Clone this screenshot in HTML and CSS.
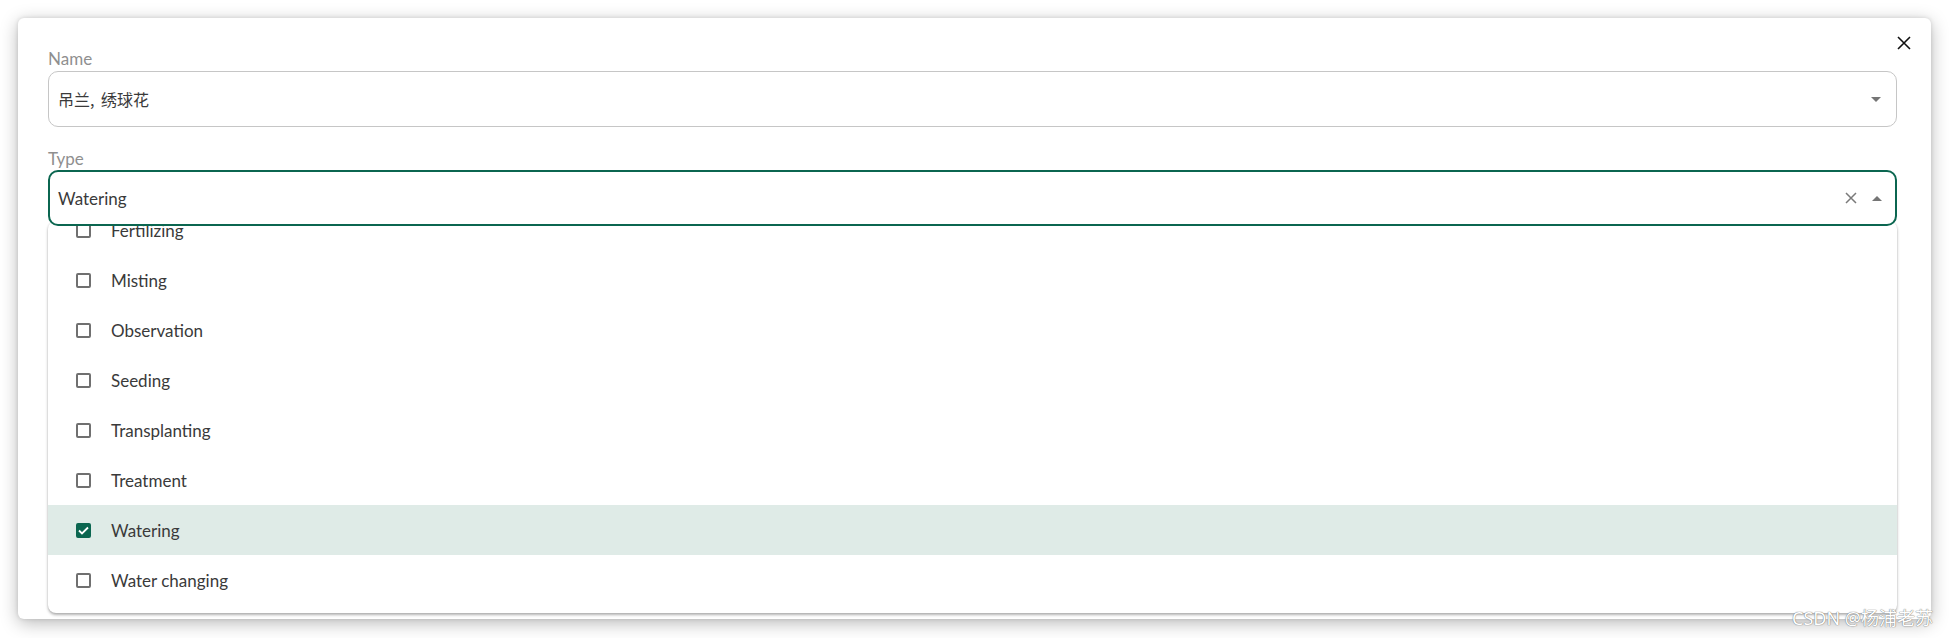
FILE: index.html
```html
<!DOCTYPE html>
<html lang="en">
<head>
    <meta charset="UTF-8">
    <meta name="viewport" content="width=device-width, initial-scale=1.0">
    <title>Add record</title>
    <link rel="stylesheet" href="styles.css">
</head>
<body>
    <div class="dialog">
        <button class="close-button" aria-label="Close">
            <svg width="14" height="14" viewBox="0 0 14 14"><path d="M1 1 L13 13 M13 1 L1 13" stroke="#111" stroke-width="1.6" fill="none"/></svg>
        </button>

        <div class="field">
            <label class="field-label">Name</label>
            <div class="select">
                <span class="select-value cjk">吊兰, 绣球花</span>
                <span class="select-icons">
                    <svg class="caret" width="10" height="5" viewBox="0 0 10 5"><path d="M0 0 L10 0 L5 5 Z" fill="#757575"/></svg>
                </span>
            </div>
        </div>

        <div class="field">
            <label class="field-label">Type</label>
            <div class="select-wrap">
                <div class="select focused">
                    <span class="select-value">Watering</span>
                    <span class="select-icons">
                        <svg class="clear" width="12" height="12" viewBox="0 0 12 12"><path d="M1 1 L11 11 M11 1 L1 11" stroke="#7a7a7a" stroke-width="1.5" fill="none"/></svg>
                        <svg class="caret" width="10" height="5" viewBox="0 0 10 5"><path d="M0 5 L10 5 L5 0 Z" fill="#757575"/></svg>
                    </span>
                </div>
                <!-- dropdown, scrolled a bit -->
                <div class="menu">
                    <ul class="options">
                        <li class="option"><span class="checkbox"></span>Fertilizing</li>
                        <li class="option"><span class="checkbox"></span>Misting</li>
                        <li class="option"><span class="checkbox"></span>Observation</li>
                        <li class="option"><span class="checkbox"></span>Seeding</li>
                        <li class="option"><span class="checkbox"></span>Transplanting</li>
                        <li class="option"><span class="checkbox"></span>Treatment</li>
                        <li class="option selected">
                            <span class="checkbox checked">
                                <svg width="11" height="9" viewBox="0 0 11 9"><path d="M1 4.5 L4 7.5 L10 1.5" stroke="#fff" stroke-width="1.8" fill="none"/></svg>
                            </span>Watering
                        </li>
                        <li class="option"><span class="checkbox"></span>Water changing</li>
                    </ul>
                </div>
            </div>
        </div>
    </div>

    <div class="watermark">CSDN @杨浦老苏</div>
</body>
</html>
```

FILE: styles.css
```css
/* General */
body {
    margin: 0;
    padding: 0;
    background-color: #ffffff;
    font-family: Lato, "Noto Sans", "Noto Sans CJK SC", sans-serif;
    color: #3a3a3a;
    height: 638px;
    overflow: hidden;
    position: relative;
}

.cjk {
    font-family: "Noto Sans CJK SC", sans-serif;
}

/* Dialog */
.dialog {
    position: relative;
    margin: 18px;
    height: 601px;
    box-sizing: border-box;
    padding: 31px 34px 0 30px;
    background-color: #fff;
    border-radius: 6px;
    box-shadow: 0 4px 18px rgba(0, 0, 0, 0.28), 0 0 4px rgba(0, 0, 0, 0.12);
}

.close-button {
    position: absolute;
    top: 17px;
    right: 19px;
    width: 16px;
    height: 16px;
    padding: 0;
    border: none;
    background: none;
    display: flex;
    align-items: center;
    justify-content: center;
}

/* Fields */
.field {
    margin-bottom: 22px;
}

.field-label {
    display: block;
    font-size: 17px;
    line-height: 20px;
    color: #8f8f8f;
    margin-bottom: 2px;
}

.field + .field .field-label {
    margin-bottom: 1px;
}

.select {
    position: relative;
    z-index: 1;
    display: flex;
    align-items: center;
    height: 56px;
    box-sizing: border-box;
    padding: 0 15px 0 9px;
    border: 1px solid #c6c6c6;
    border-radius: 10px;
    background-color: #fff;
    font-size: 16px;
}

.select.focused {
    border: 2px solid #0b6650;
    padding: 0 13px 0 8px;
    font-size: 17px;
}

.select-value {
    flex: 1;
    word-spacing: 3px;
}

.select-icons {
    display: flex;
    align-items: center;
    gap: 15px;
}

.select-icons svg {
    display: block;
}

/* Dropdown */
.select-wrap {
    position: relative;
}

.menu {
    position: absolute;
    top: calc(100% - 5px);
    left: 0;
    right: 0;
    height: 392px;
    overflow: hidden;
    background-color: #fff;
    border-radius: 8px;
    box-shadow: 0 2px 3px rgba(0, 0, 0, 0.3), 0 0 2px rgba(0, 0, 0, 0.1);
}

.options {
    list-style: none;
    margin: -16px 0 0;
    padding: 0;
}

.option {
    display: flex;
    align-items: center;
    height: 50px;
    padding-left: 28px;
    font-size: 17px;
    color: #3a3a3a;
}

.option.selected {
    background-color: #dfebe7;
}

.checkbox {
    width: 15px;
    height: 15px;
    box-sizing: border-box;
    border: 2px solid #707070;
    border-radius: 2px;
    margin-right: 20px;
    display: flex;
    align-items: center;
    justify-content: center;
}

.checkbox.checked {
    border-color: #0b6650;
    background-color: #0b6650;
}

/* Watermark */
.watermark {
    position: absolute;
    right: 16px;
    top: 604px;
    font-family: "Noto Sans", "Noto Sans CJK SC", sans-serif;
    font-size: 18px;
    color: #fff;
    text-shadow: 0 0 1px #777, 0 0 1px #777;
}
```
